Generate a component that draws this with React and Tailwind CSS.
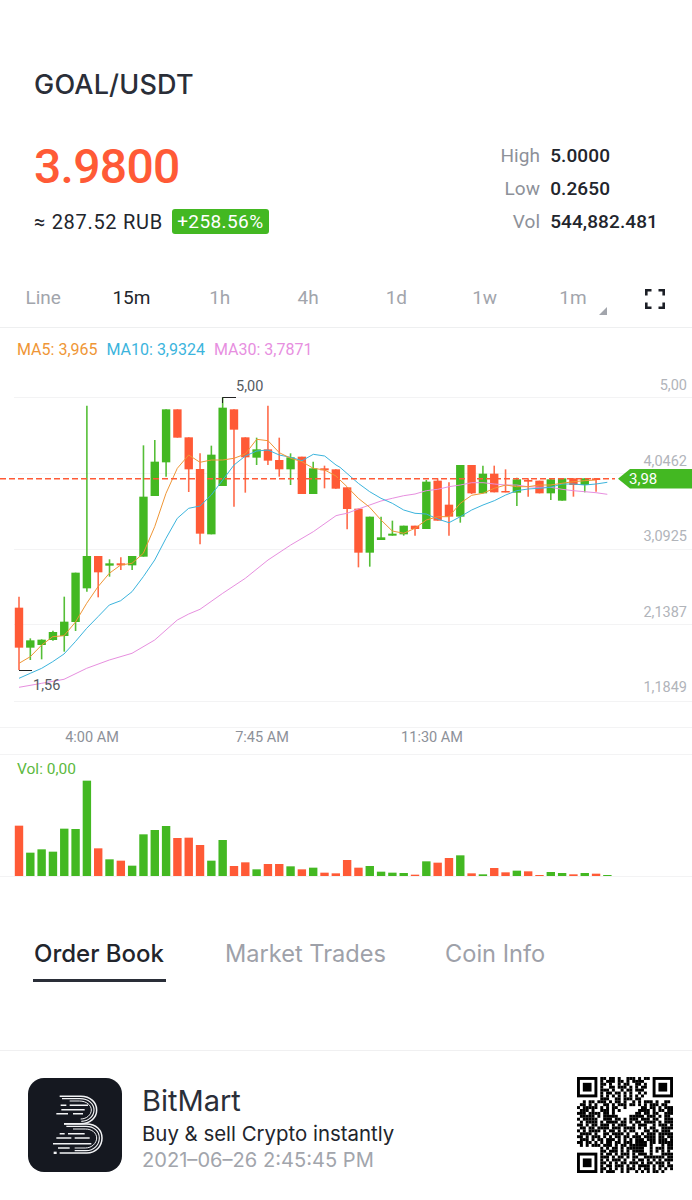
import React from "react";

const GREEN = "#43b822";
const RED = "#ff5a36";

// [color, wickTop, bodyTop, bodyBottom, wickBottom] (source units: 3 per pixel)
const candles = [
  ["r",680,713,833,900],["g",805,811,833,870],["g",808,809,825,868],["g",782,786,810,812],["g",680,755,798,845],
  ["g",608,608,756,783],["g",107,558,655,665],["r",558,558,607,682],["g",568,580,587,620],["r",562,580,586,600],
  ["g",558,558,586,600],["g",226,380,560,560],["g",210,275,378,378],["g",118,118,277,320],["r",118,118,203,203],
  ["r",202,202,298,366],["r",250,297,491,523],["g",227,254,493,493],["g",82,113,348,348],["r",118,118,179,410],
  ["r",202,202,262,368],["g",203,238,263,285],["r",107,238,272,285],["r",203,270,298,320],["g",250,262,298,345],
  ["r",260,260,372,372],["g",275,295,372,372],["r",287,295,301,355],["r",298,298,356,356],["r",352,352,417,478],
  ["r",416,416,548,592],["g",440,440,548,590],["g",440,502,510,510],["g",452,491,497,497],["g",467,467,493,497],
  ["r",467,467,477,497],["g",330,335,477,477],["r",325,332,452,452],["r",337,404,440,497],["g",285,285,440,458],
  ["r",285,285,370,372],["g",287,311,370,370],["r",287,311,367,367],["r",298,363,367,367],["g",323,328,368,408],
  ["r",325,330,335,380],["r",332,332,370,370],["g",325,328,370,390],["g",325,325,392,392],["r",325,325,345,380],
  ["g",325,325,345,367],["r",325,325,330,365],
];

const L = (pts) => pts.map(([x, y]) => `${(x / 3).toFixed(1)},${(y / 3).toFixed(1)}`).join(" ");
const R = (pts) => pts.map(([x, y]) => `${(340 + x / 3).toFixed(1)},${(y / 3).toFixed(1)}`).join(" ");

const ma5 = L([[57,880],[91,860],[125,825],[158,800],[192,797],[226,757],[260,700],[294,650],[328,610],[362,585],[396,580],[430,550],[464,470],[498,370],[532,295],[566,255],[600,277],[634,270],[668,270],[702,265],[736,252],[770,208],[804,212],[838,248],[872,265],[906,275],[940,295],[974,300],[1008,318]]) + " " +
  R([[0,330],[21,350],[55,385],[89,412],[123,450],[157,483],[191,490],[225,475],[259,450],[293,440],[327,440],[361,400],[395,376],[429,370],[463,355],[497,345],[530,350],[564,350],[598,345],[632,345],[666,340],[700,335],[734,332],[768,330]]);
const ma10 = L([[57,925],[91,910],[125,895],[158,875],[192,852],[226,815],[260,775],[294,740],[328,705],[362,692],[396,665],[430,620],[464,570],[498,505],[532,445],[566,415],[600,408],[634,375],[668,330],[702,285],[736,258],[770,243],[804,240],[838,255],[872,262],[906,272],[940,253],[974,258],[1008,285]]) + " " +
  R([[0,292],[55,340],[89,365],[123,385],[157,400],[191,420],[225,430],[259,432],[293,447],[327,458],[361,440],[395,420],[429,405],[463,392],[497,375],[530,362],[564,357],[598,355],[632,352],[666,342],[700,342],[734,345],[768,342],[802,337]]);
const ma30 = L([[57,952],[125,940],[192,928],[260,895],[328,870],[396,850],[464,810],[532,750],[566,732],[600,718],[668,670],[736,625],[804,570],[872,525],[940,485],[1008,437]]) + " " +
  R([[0,434],[21,430],[55,417],[89,405],[123,393],[157,385],[191,377],[225,372],[259,362],[293,358],[327,350],[361,345],[395,338],[429,338],[463,342],[497,345],[530,345],[564,350],[598,352],[632,352],[666,358],[700,362],[734,365],[768,368],[802,373]]);

const vols = [
  ["r",227],["g",308],["g",298],["g",305],["g",236],["g",237],["g",92],["r",295],["g",328],["r",332],["g",347],["g",253],["g",240],["g",228],["r",264],["r",263],["r",285],["g",332],["g",270],["r",348],["r",337],["g",358],["r",342],["r",342],["g",349],["r",358],["g",353],["r",368],["r",370],["r",330],
  ["r",353],["g",348],["g",365],["g",368],["g",369],["r",374],["g",334],["r",338],["r",324],["g",316],["r",370],["g",373],["r",354],["r",367],["g",362],["r",364],["r",375],["g",366],["g",369],["r",373],["g",369],["r",371],["g",375],
];

const qr = [
  "........##.##.#..###.#.##........",
  "........#.###.##.#.####..........",
  "........##.#..#.##..##.#.........",
  "........#..##.###.#.#.##.........",
  "........###.#..#.##.###..........",
  "........#.##.##.#.#..#.#.........",
  "........#.#.#.#.#.#.#.#..........",
  "........###..##.###.##...........",
  "..#.##.###.#.##.#..#.#.###.#..##.",
  ".##.#.#..##.#.###.##.#.#.###.##..",
  "#.#####.#.#.##..#.....##.##.#.###",
  ".###.#..###.#.#......####.#.##.##",
  "###.####.##.#.......##.##.##..###",
  ".#####.#.#####....#####.###.#.##.",
  "#.#####..###.##.#.###.###.##..###",
  ".#.####.#.####.##.#.##.####.#.###",
  "##.#.##.###.#.###..#.###..#.###.#",
  ".##.##.####.###.####.#.#.##..####",
  "#.#.####.#.##.#.#.##...##.##.###.",
  ".####.#..##.####.#..#.#.###.#####",
  "##.#.###.#.#.##.##.###.####.##.##",
  ".###.#.##.###.#.#.#.###.###.###.#",
  "##.##.#.#.##.##.###.####.##.#####",
  ".#.#.###.###.#.##.######.#...#.##",
  "........#.#.##.#.######..#.###.##",
  "........##.###.#.#.####..#.#.#.#.",
  "........#.##.#.###.#.###.#...####",
  "........###.#.##.#.##..#######.##",
  "........#.#.###.#..#.##.#.#.#.###",
  "........##.#.#.##.###.#.##.###.#.",
  "........#.##.###.#.#.####.#.##.##",
  "........##.#.#.#.###.#.##.#.#.#.#",
  "........#.###..#.#..#.#.#.##.#...",
];

function Finder({ x, y }) {
  return (
    <g>
      <rect x={x + 0.5} y={y + 0.5} width="6" height="6" fill="none" stroke="#000" strokeWidth="1" />
      <rect x={x + 2} y={y + 2} width="3" height="3" fill="#000" />
    </g>
  );
}

function QR() {
  return (
    <svg viewBox="0 0 33 33" className="w-[96px] h-[96px] shrink-0 blur-[0.5px]">
      {qr.flatMap((row, r) =>
        row.split("").map((c, i) =>
          c === "#" ? <rect key={`${r}-${i}`} x={i} y={r} width="1.02" height="1.02" fill="#000" /> : null
        )
      )}
      <Finder x={0} y={0} />
      <Finder x={26} y={0} />
      <Finder x={0} y={26} />
    </svg>
  );
}

function Logo() {
  return (
    <div className="w-[94px] h-[94px] rounded-[16px] bg-[#151820] shrink-0">
      <svg viewBox="10 10 282 282" className="w-full h-full" fill="none" stroke="#f2f3f5" strokeLinecap="butt">
        <path d="M105 65H168C198 65 216 84 216 106C216 128 198 147 168 147H118" strokeWidth="4.5" />
        <path d="M112 72H166C192 72 208 88 208 106C208 124 192 140 170 140" strokeWidth="3.5" />
        <path d="M135 79H164C186 79 200 92 200 106C200 120 186 133 168 133" strokeWidth="3" />
        <path d="M118 148H186C214 148 232 166 232 190C232 214 214 235 186 235H105" strokeWidth="4.5" />
        <path d="M125 155H184C208 155 224 170 224 190C224 210 208 228 184 228H150" strokeWidth="3.5" />
        <path d="M145 163H182C202 163 216 175 216 190C216 205 202 220 182 220H150" strokeWidth="3" />
        <path d="M108 92H125M135 92H190M110 105H180M95 117H130M145 117H175M105 177H120M130 177H180M95 190H140M150 190H195M85 207H200M100 220H135" strokeWidth="4.5" />
        <rect x="87" y="231" width="9" height="7" fill="#f2f3f5" stroke="none" />
      </svg>
    </div>
  );
}

const priceLabels = [["5,00", 20], ["4,0462", 96], ["3,0925", 171], ["2,1387", 247], ["1,1849", 322]];
const grids = [27, 103, 179, 254, 331];

function Chart() {
  const z = (v) => v / 3;
  return (
    <svg viewBox="0 0 692 357" className="block w-[692px] h-[357px]" style={{ fontFamily: "Roboto, sans-serif" }}>
      {grids.map((y) => (
        <line key={y} x1="14" x2="692" y1={y + 0.5} y2={y + 0.5} stroke="#f3f3f4" strokeWidth="1" />
      ))}
      {candles.map(([c, a, b, d, e], i) => {
        const x = 19 + i * 11.315;
        const col = c === "g" ? GREEN : RED;
        return (
          <g key={i}>
            <line x1={x} x2={x} y1={z(a)} y2={z(e)} stroke={col} strokeWidth="1.6" opacity="0.9" />
            <rect x={x - 4.2} y={z(b)} width="8.4" height={Math.max(z(d) - z(b), 1.5)} fill={col} />
          </g>
        );
      })}
      <polyline points={ma30} fill="none" stroke="#e78fdf" strokeWidth="1" strokeLinejoin="round" />
      <polyline points={ma10} fill="none" stroke="#3bb4dd" strokeWidth="1" strokeLinejoin="round" />
      <polyline points={ma5} fill="none" stroke="#ef9636" strokeWidth="1" strokeLinejoin="round" />
      <line x1="0" x2="615" y1="108.7" y2="108.7" stroke={RED} strokeWidth="1.6" strokeDasharray="6 3" />
      <polygon points="618,108.7 630,99 692,99 692,118.4 630,118.4" fill={GREEN} />
      <text x="629" y="114" fill="#fff" fontSize="15">3,98</text>
      <path d="M222.5 33V27.5H236" fill="none" stroke="#222" strokeWidth="1" />
      <text x="236" y="21" fill="#555a62" fontSize="14.5">5,00</text>
      <path d="M19 300.5H32" fill="none" stroke="#222" strokeWidth="1" />
      <text x="33" y="319.5" fill="#555a62" fontSize="14.5">1,56</text>
      {priceLabels.map(([t, y]) => (
        <text key={t} x="687" y={y} textAnchor="end" fill="#b1b4ba" fontSize="14.5">{t}</text>
      ))}
    </svg>
  );
}

function Volume() {
  return (
    <svg viewBox="0 0 692 100" className="block w-[692px] h-[100px]">
      {vols.map(([c, top], i) => {
        const x = 19 + i * 11.315;
        const y = (top - 378) / 3 + 100;
        return <rect key={i} x={x - 4.2} y={y} width="8.4" height={100 - y} fill={c === "g" ? GREEN : RED} />;
      })}
    </svg>
  );
}

const frames = ["Line", "15m", "1h", "4h", "1d", "1w", "1m"];

export default function App() {
  return (
    <div className="w-[692px] h-[1200px] bg-white overflow-hidden [font-family:Roboto,sans-serif] text-[#2a2e38]">
      <div className="pt-[67px] pl-[34px] h-[126px]">
        <div className="text-[27px] leading-[36px] font-medium tracking-[0.2px] [font-family:Inter,sans-serif]">GOAL/USDT</div>
      </div>

      <div className="flex justify-between pl-[34px] pr-[34px] h-[144px]">
        <div className="pt-[1px]">
          <div className="text-[48px] leading-[80px] font-medium text-[#ff5a36] tracking-[-0.7px]">3.9800</div>
          <div className="flex items-center mt-[2px] h-[25px]">
            <span className="text-[20px] tracking-[0.7px] text-[#22252c]">≈ 287.52 RUB</span>
            <span className="ml-[9px] h-[25px] w-[97px] rounded-[3px] bg-[#43b822] text-white text-[19px] leading-[25px] text-center tracking-[0.4px]">+258.56%</span>
          </div>
        </div>
        <div className="pt-[13px] grid grid-cols-[auto_auto] gap-x-[10px] text-[19px] leading-[33px] tracking-[0.1px] h-fit">
          <span className="text-right text-[#8d9199]">High</span><span className="text-[#22252c] font-medium">5.0000</span>
          <span className="text-right text-[#8d9199]">Low</span><span className="text-[#22252c] font-medium">0.2650</span>
          <span className="text-right text-[#8d9199]">Vol</span><span className="text-[#22252c] font-medium">544,882.481</span>
        </div>
      </div>

      <div className="flex items-center h-[58px] border-b border-[#eeeff0] relative">
        <div className="grid grid-cols-[repeat(7,88.3px)] w-[620px] -ml-px">
          {frames.map((f) => (
            <span key={f} className={`text-center text-[19px] ${f === "15m" ? "text-[#22252c]" : "text-[#a2a5ac]"}`}>{f}</span>
          ))}
        </div>
        <span className="absolute left-[599px] top-[37px] w-0 h-0 border-l-[8px] border-l-transparent border-b-[8px] border-b-[#a2a5ac]" />
        <svg viewBox="0 0 20 20" className="ml-[26px] w-[20px] h-[20px]" fill="none" stroke="#1c1f26" strokeWidth="2.6">
          <path d="M1.3 6.5V1.3H6.5M13.5 1.3H18.7V6.5M18.7 13.5V18.7H13.5M6.5 18.7H1.3V13.5" />
        </svg>
      </div>

      <div className="flex gap-[9px] pl-[17px] h-[42px] items-center text-[16px] pt-[2px]">
        <span className="text-[#ef9636]">MA5: 3,965</span>
        <span className="text-[#3bb4dd]">MA10: 3,9324</span>
        <span className="text-[#e78fdf]">MA30: 3,7871</span>
      </div>

      <Chart />

      <div className="h-[28px] border-t border-b border-[#f3f3f4] pt-[1px] pl-[7px] grid grid-cols-[repeat(3,170px)] text-[14.5px] leading-[18px] text-[#8d9199]">
        <span className="text-center">4:00 AM</span>
        <span className="text-center">7:45 AM</span>
        <span className="text-center">11:30 AM</span>
      </div>

      <div className="h-[21px] pl-[17px] pt-[4px] text-[15.5px] leading-[20px] text-[#5cb940]">Vol: 0,00</div>
      <div className="border-b border-[#f3f3f4] w-full h-[101px]">
        <Volume />
      </div>

      <div className="flex pl-[34px] h-[173px] pt-[60px] text-[23.6px] leading-[34px] font-normal [font-family:Inter,sans-serif] text-[#9ea1a9]">
        <div className="w-[191px]">
          <span className="text-[#22252c] font-medium text-[24px]">Order Book</span>
          <div className="mt-[8px] h-[3px] w-[133px] -ml-px bg-[#2a2e38]" />
        </div>
        <div className="w-[220px]">Market Trades</div>
        <div>Coin Info</div>
      </div>

      <div className="h-[150px] border-t border-[#f0f0f1] flex items-center pl-[28px] pr-[19px] pb-[2px]">
        <Logo />
        <div className="ml-[20px] flex-1 pt-[6px] [font-family:Inter,sans-serif]">
          <div className="text-[29px] leading-[38px]">BitMart</div>
          <div className="text-[20.4px] leading-[27px] text-[#22252c]">Buy &amp; sell Crypto instantly</div>
          <div className="text-[20.1px] leading-[27px] text-[#a2a5ac]">2021–06–26 2:45:45 PM</div>
        </div>
        <QR />
      </div>
    </div>
  );
}
